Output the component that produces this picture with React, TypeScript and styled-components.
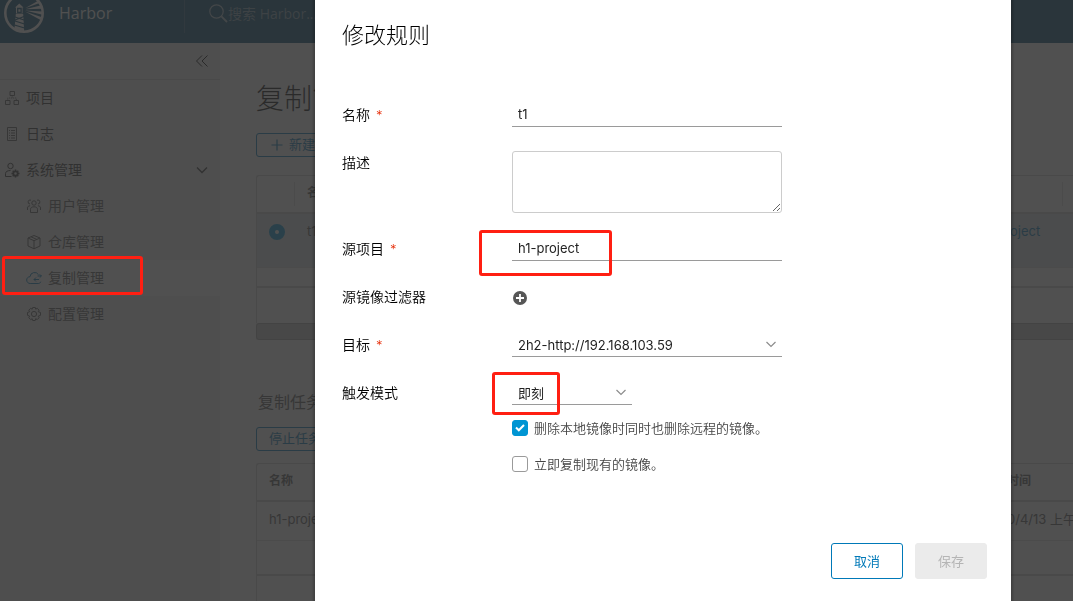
import React, { useState } from "react";
import styled, { createGlobalStyle, css } from "styled-components";

const latin = `Inter, "Noto Sans CJK SC", sans-serif`;
const humanist = `"Open Sans", "Noto Sans CJK SC", sans-serif`;

const GlobalStyle = createGlobalStyle`
  *, *::before, *::after { box-sizing: border-box; }
  body {
    margin: 0;
    overflow: hidden;
    background: #fafafa;
    color: #565656;
    font-family: ${latin};
    font-size: 13px;
    line-height: 24px;
  }
  button, input, select, textarea { font: inherit; color: inherit; }
`;

const Page = styled.div`
  display: flex;
  flex-direction: column;
  height: 100vh;
  overflow: hidden;
`;

/* ---------- header ---------- */

const Header = styled.header`
  display: flex;
  flex: none;
  align-items: center;
  height: 43px;
  padding: 0 0 17px 4px;
  background: #004a70;
  color: #fafafa;
  font-family: ${humanist};
`;

const Brand = styled.a`
  display: flex;
  align-items: center;
  gap: 15px;
  width: 180px;
  height: 40px;
  color: inherit;
  font-size: 16px;
  text-decoration: none;
`;

const Search = styled.label`
  display: flex;
  flex: 1;
  align-items: center;
  height: 40px;
  padding-left: 24px;
  border-left: 1px solid #2f6685;
  color: #a8bdc9;
`;

const SearchInput = styled.input`
  flex: 1;
  padding: 2px 0 0;
  border: 0;
  background: none;
  font-size: 14px;
  &::placeholder { color: #7f9fb2; opacity: 1; }
`;

/* ---------- side navigation ---------- */

const Body = styled.div`
  display: flex;
  flex: 1;
  min-height: 0;
`;

const Sidebar = styled.nav`
  flex: none;
  width: 220px;
  background: #eeeeee;
`;

const CollapseBar = styled.div`
  display: flex;
  justify-content: flex-end;
  height: 37px;
  padding-right: 10px;
  border-bottom: 1px solid #cccccc;
`;

const IconButton = styled.button`
  display: flex;
  align-items: center;
  padding: 0;
  border: 0;
  background: none;
`;

const CollapseButton = styled(IconButton)`
  color: #000000;
`;

const NavLink = styled.a<{ $sub?: boolean; $active?: boolean }>`
  display: flex;
  align-items: center;
  gap: 6px;
  height: 36px;
  padding: 0 11px 0 ${(p) => (p.$sub ? 26 : 4)}px;
  background: ${(p) => (p.$active ? "#ffffff" : "none")};
  color: ${(p) => (p.$sub ? "#565656" : "#313131")};
  font-size: 14px;
  text-decoration: none;
  svg { flex: none; }
`;

const NavText = styled.span`
  flex: 1;
`;

/* ---------- main area ---------- */

const Main = styled.main`
  flex: 1;
  min-width: 0;
  padding: 38px 0 0 36px;
  overflow: hidden;
`;

const PageTitle = styled.h1`
  margin: 0 0 16px;
  color: #000000;
  font-size: 28px;
  font-weight: 200;
  line-height: 36px;
`;

const SectionTitle = styled.h2`
  margin: 50px 0 13px;
  padding-left: 2px;
  font-size: 16px;
  font-weight: 400;
  line-height: 24px;
`;

const OutlineButton = styled.button`
  display: flex;
  align-items: center;
  gap: 6px;
  height: 24px;
  padding: 0 12px 2px;
  border: 1px solid #0079b8;
  border-radius: 3px;
  background: none;
  color: #0079b8;
`;

const GridFrame = styled.div<{ $gap: number }>`
  margin-top: ${(p) => p.$gap}px;
  border: solid #cccccc;
  border-width: 1px 0 0 1px;
  border-radius: 3px 0 0 0;
`;

const Grid = styled.table`
  width: 100%;
  border-collapse: collapse;
  table-layout: fixed;
`;

const HeadCell = styled.th`
  height: 37px;
  padding: 0 12px 2px;
  border-bottom: 2px solid #cccccc;
  font-size: 12px;
  font-weight: 600;
  text-align: left;
  white-space: nowrap;
`;

const DividedHead = styled(HeadCell)`
  background: linear-gradient(#dddddd, #dddddd) right center / 1px 24px no-repeat;
`;

const Cell = styled.td<{ $selected?: boolean }>`
  height: ${(p) => (p.$selected ? 54 : 40)}px;
  padding: 5px 12px;
  border-bottom: 1px solid #dddddd;
  background: ${(p) => (p.$selected ? "#d9e4ea" : "none")};
  vertical-align: top;
  white-space: nowrap;
`;

const GridFooter = styled.div<{ $gap: number; $height: number }>`
  height: ${(p) => p.$gap + p.$height}px;
  padding-top: ${(p) => p.$gap}px;
  &::before {
    content: "";
    display: block;
    border-top: 2px solid #cccccc;
  }
`;

const ScrollTrack = styled.div`
  height: 17px;
  border: 1px solid #aaaaaa;
  border-right: 0;
  border-radius: 3px 0 0 3px;
  background: #c8c8c8;
`;

const Radio = styled.input`
  display: block;
  width: 16px;
  height: 16px;
  margin: 5px 0 0;
  appearance: none;
  border: 6px solid #0095d3;
  border-radius: 50%;
  background: #ffffff;
`;

const ProjectLink = styled.a`
  color: #0079b8;
  text-decoration: none;
`;

/* ---------- dialog ---------- */

const Backdrop = styled.div`
  position: fixed;
  inset: 0;
  display: flex;
  padding: 0 62px 0 315px;
  background: rgba(49, 49, 49, 0.85);
`;

const Dialog = styled.form`
  display: flex;
  flex: 1;
  flex-direction: column;
  min-width: 0;
  padding: 21px 24px 22px 27px;
  background: #ffffff;
  box-shadow: 0 1px 2px 2px rgba(0, 0, 0, 0.2);
`;

const DialogTitle = styled.h2`
  margin: 0 0 54px;
  color: #000000;
  font-size: 22px;
  font-weight: 200;
  line-height: 28px;
`;

const Fields = styled.div`
  display: flex;
  flex: 1;
  flex-direction: column;
  gap: 24px;
`;

const Row = styled.div`
  display: flex;
  align-items: flex-start;
`;

const Label = styled.label`
  flex: none;
  width: 170px;
  color: #000000;
  font-size: 14px;
  font-weight: 350;
`;

const Required = styled.span`
  margin-left: 6px;
  color: #e62700;
  font-size: 13px;
  font-weight: 300;
  line-height: 16px;
`;

const Control = styled.div<{ $narrow?: boolean }>`
  position: relative;
  display: flex;
  width: ${(p) => (p.$narrow ? 120 : 270)}px;
`;

const underlined = css`
  width: 100%;
  height: 24px;
  padding: 0 6px 2px;
  border: 0;
  border-bottom: 1px solid #9a9a9a;
  border-radius: 0;
  outline: 0;
  background: none;
  color: #222222;
`;

const TextInput = styled.input`
  ${underlined}
`;

const Select = styled.select`
  ${underlined}
  appearance: none;
`;

const SelectArrow = styled.svg`
  position: absolute;
  top: 8px;
  right: 6px;
  pointer-events: none;
`;

const TextArea = styled.textarea`
  width: 100%;
  height: 62px;
  padding: 6px;
  border: 1px solid #cccccc;
  border-radius: 3px;
  outline: 0;
`;

const AddButton = styled(IconButton)`
  height: 26px;
  margin-bottom: -2px;
  color: #565656;
`;

const Checks = styled.div`
  display: flex;
  flex-direction: column;
  margin-top: 5px;
`;

const CheckLabel = styled.label`
  display: flex;
  align-items: center;
  gap: 6px;
  height: 36px;
  font-weight: 350;
  color: #444444;
`;

const CheckMark = styled.span`
  display: grid;
  > * { grid-area: 1 / 1; }
  svg { pointer-events: none; }
`;

const CheckInput = styled.input`
  width: 16px;
  height: 16px;
  margin: 0;
  appearance: none;
  border: 1px solid #9a9a9a;
  border-radius: 3px;
  &:checked {
    border-color: #0095d3;
    background: #0095d3;
  }
`;

const Actions = styled.div`
  display: flex;
  justify-content: flex-end;
  gap: 12px;
`;

const ActionButton = styled.button`
  width: 72px;
  height: 36px;
  padding: 0;
  border: 1px solid #0079b8;
  border-radius: 3px;
  background: #ffffff;
  color: #0079b8;
  &:disabled {
    border-color: #ebebeb;
    background: #ebebeb;
    color: #b5b5b5;
  }
`;

/* red frame drawn round a spot of interest */
const Marker = styled.span<{ $top: number; $left: number; $width: number; $height: number }>`
  position: absolute;
  z-index: 2;
  top: ${(p) => p.$top}px;
  left: ${(p) => p.$left}px;
  width: ${(p) => p.$width}px;
  height: ${(p) => p.$height}px;
  border: 3px solid #ff1f12;
  border-radius: 3px;
  pointer-events: none;
`;

const MarkerLayer = styled.div`
  position: fixed;
  inset: 0;
  pointer-events: none;
`;

/* ---------- drawings ---------- */

const Logo = () => (
  <svg width="40" height="40" viewBox="0 0 40 40" fill="none" aria-hidden="true">
    <circle cx="20" cy="20" r="18.7" stroke="#fafafa" strokeWidth="2.6" />
    <g fill="#fafafa">
      <path d="M11 14.5l4.300-4 4.200 4h-.9v6h-6.600v-6z" />
      <path d="M11.800 21h7.400l1 17.400-9.700-2.700z" />
      <path d="M21 15.300L35 7.200l1.400 2.600zM21 16.300l16.500-4 .7 3.500zM21 17.400l17.500 1v3.400zM21 18.600l17 5.600-1 3.100z" />
    </g>
    <g stroke="#004a70" strokeWidth="1.300">
      <path d="M13.700 15.500h3.400v4h-3.400z" />
      <path d="M11 24l9 3M11 28l9.500 3M10.500 32l10 3M20 23.500l-9 3.500" />
    </g>
  </svg>
);

const SearchIcon = () => (
  <svg width="19" height="19" viewBox="0 0 19 19" fill="none" stroke="currentColor" strokeWidth="1.200" aria-hidden="true">
    <circle cx="7.500" cy="7.500" r="6.700" />
    <path d="M12.400 12.400l5.600 5.600" strokeWidth="1.800" />
  </svg>
);

const line = { width: 16, height: 16, viewBox: "0 0 16 16", fill: "none", stroke: "currentColor", strokeWidth: 1, "aria-hidden": true };

const ProjectIcon = () => (
  <svg {...line} stroke="#565656">
    <path d="M6 1.500h4.500v4H6zM1.500 10.500H6v4H1.500zM10 10.500h4.500v4H10z" />
    <path d="M8.200 5.500V8M3.700 10.500V8h8.600v2.500" strokeDasharray="1 1" />
  </svg>
);
const LogIcon = () => (
  <svg {...line} stroke="#565656">
    <path d="M3.500 1.500h9v13h-9zM5 4.500h1M7 4.500h4M5 7h1M7 7h4M5 9.500h1M7 9.500h4M5 12h1M7 12h4" />
  </svg>
);
const AdminIcon = () => (
  <svg {...line}>
    <circle cx="6.500" cy="4" r="2.700" />
    <path d="M7.500 14.500h-6v-3c0-1.900 2.200-3 5-3" />
    <circle cx="11.500" cy="11.500" r="2.200" strokeWidth="1.800" />
    <path d="M11.500 7.500v1.500M11.500 14v1.500M7.500 11.500H9M14 11.500h1.500M8.700 8.700l1 1M13.300 13.300l1 1M14.300 8.700l-1 1M9.700 13.300l-1 1" strokeWidth="1.500" />
  </svg>
);
const UsersIcon = () => (
  <svg {...line}>
    <circle cx="8" cy="5" r="2.200" />
    <path d="M4.500 14.500v-3C4.500 9.500 6 8.800 8 8.800s3.500.7 3.500 2.700v3zM5 2.200A2 2 0 1 0 4 6M11 2.200A2 2 0 1 1 12 6M1.500 12v-2c0-1.400 1-2.200 2.600-2.200M14.500 12v-2c0-1.400-1-2.200-2.600-2.200" />
  </svg>
);
const CubeIcon = () => (
  <svg {...line}>
    <path d="M8 1.500l6 2.500v8l-6 2.800L2 12V4zM2 4l6 2.700L14 4M8 6.700v8M5 2.800l6 2.700" />
  </svg>
);
const ReplicationIcon = () => (
  <svg {...line} stroke="#0079b8">
    <path d="M12.500 4.700A4.600 4.600 0 0 0 4 6.700C2 6.700.7 8.200.7 10c0 2 1.500 3.500 3.500 3.500h8c1.300 0 2.300-.7 2.600-1.800M8 9.500h5M10 7.500l-2 2 2 2M15.500 6h-4M13.700 4.300L15.400 6l-1.700 1.700" />
  </svg>
);
const GearIcon = () => (
  <svg {...line}>
    <circle cx="8" cy="8" r="2.600" />
    <path d="M6.700 1.500h2.600l.4 1.700 1.500-.9 1.900 1.900-.9 1.500 2.300.8v2.800l-2.300.9.9 1.500-1.900 1.900-1.500-.9-.5 1.800H6.700l-.5-1.800-1.500.9-1.900-1.900.9-1.500-2.200-.9V6.500l2.200-.8-.9-1.500 1.900-1.900 1.500.9z" />
  </svg>
);
const CollapseIcon = () => (
  <svg {...line}>
    <path d="M8 2.500L2.500 8 8 13.500M13.500 2.500L8 8l5.500 5.500" />
  </svg>
);
const CaretIcon = () => (
  <svg width="14" height="14" viewBox="0 0 14 14" fill="none" stroke="currentColor" strokeWidth="1.300" aria-hidden="true">
    <path d="M2 4.500l5 5 5-5" />
  </svg>
);
const PlusIcon = () => (
  <svg width="14" height="14" viewBox="0 0 14 14" stroke="currentColor" strokeWidth="1.200" aria-hidden="true">
    <path d="M8 2.500v11M2.500 8h11" />
  </svg>
);
const AddIcon = () => (
  <svg width="16" height="16" viewBox="0 0 16 16" aria-hidden="true">
    <circle cx="8" cy="8" r="7" fill="currentColor" />
    <path d="M8 4v8M4 8h8" stroke="#ffffff" strokeWidth="1.800" />
  </svg>
);
const Arrow = () => (
  <SelectArrow width="10" height="7" viewBox="0 0 10 7" fill="none" stroke="#8c8c8c" strokeWidth="1.200" aria-hidden="true">
    <path d="M.5 1L5 5.500 9.500 1" />
  </SelectArrow>
);

/* ---------- parts ---------- */

const subItems = [
  { text: "用户管理", Icon: UsersIcon },
  { text: "仓库管理", Icon: CubeIcon },
  { text: "复制管理", Icon: ReplicationIcon, active: true },
  { text: "配置管理", Icon: GearIcon },
];

function Check({ text, initial }: { text: string; initial: boolean }) {
  const [on, setOn] = useState(initial);
  return (
    <CheckLabel>
      <CheckMark>
        <CheckInput type="checkbox" checked={on} onChange={() => setOn(!on)} />
        {on && (
          <svg width="16" height="16" viewBox="0 0 16 16" fill="none" stroke="#ffffff" strokeWidth="2" aria-hidden="true">
            <path d="M4 7.500l2.800 2.800L12 5" />
          </svg>
        )}
      </CheckMark>
      {text}
    </CheckLabel>
  );
}

function RuleDialog() {
  return (
    <Backdrop>
      <Dialog role="dialog" aria-labelledby="dialog-title" onSubmit={(e) => e.preventDefault()}>
        <DialogTitle id="dialog-title">修改规则</DialogTitle>
        <Fields>
          <Row>
            <Label htmlFor="name">名称<Required>*</Required></Label>
            <Control><TextInput id="name" defaultValue="t1" /></Control>
          </Row>
          <Row>
            <Label htmlFor="description">描述</Label>
            <Control><TextArea id="description" /></Control>
          </Row>
          <Row>
            <Label htmlFor="source">源项目<Required>*</Required></Label>
            <Control>
              <TextInput id="source" defaultValue="h1-project" />
              <Marker $top={-7} $left={-33} $width={133} $height={46} />
            </Control>
          </Row>
          <Row>
            <Label as="span">源镜像过滤器</Label>
            <AddButton type="button" aria-label="源镜像过滤器"><AddIcon /></AddButton>
          </Row>
          <Row>
            <Label htmlFor="target">目标<Required>*</Required></Label>
            <Control>
              <Select id="target"><option>2h2-http://192.168.103.59</option></Select>
              <Arrow />
            </Control>
          </Row>
          <Row>
            <Label htmlFor="trigger">触发模式</Label>
            <div>
              <Control $narrow>
                <Select id="trigger"><option>即刻</option></Select>
                <Arrow />
                <Marker $top={-9} $left={-20} $width={68} $height={43} />
              </Control>
              <Checks>
                <Check text="删除本地镜像时同时也删除远程的镜像。" initial />
                <Check text="立即复制现有的镜像。" initial={false} />
              </Checks>
            </div>
          </Row>
        </Fields>
        <Actions>
          <ActionButton type="button">取消</ActionButton>
          <ActionButton type="submit" disabled>保存</ActionButton>
        </Actions>
      </Dialog>
    </Backdrop>
  );
}

export default function App() {
  return (
    <>
      <GlobalStyle />
      <Page>
        <Header>
          <Brand href="#"><Logo />Harbor</Brand>
          <Search>
            <SearchIcon />
            <SearchInput type="search" placeholder="搜索 Harbor..." />
          </Search>
        </Header>
        <Body>
          <Sidebar>
            <CollapseBar>
              <CollapseButton type="button" aria-label="«"><CollapseIcon /></CollapseButton>
            </CollapseBar>
            <NavLink href="#"><ProjectIcon /><NavText>项目</NavText></NavLink>
            <NavLink href="#"><LogIcon /><NavText>日志</NavText></NavLink>
            <NavLink href="#"><AdminIcon /><NavText>系统管理</NavText><CaretIcon /></NavLink>
            {subItems.map(({ text, Icon, active }) => (
              <NavLink key={text} href="#" $sub $active={active}><Icon /><NavText>{text}</NavText></NavLink>
            ))}
          </Sidebar>
          <Main>
            <PageTitle>复制管理</PageTitle>
            <OutlineButton type="button"><PlusIcon />新建规则</OutlineButton>
            <GridFrame $gap={18}>
              <Grid>
                <colgroup><col width="38" /><col /><col width="96" /><col width="10" /></colgroup>
                <thead>
                  <tr><DividedHead /><HeadCell>名称</HeadCell><DividedHead>项目</DividedHead><HeadCell /></tr>
                </thead>
                <tbody>
                  <tr>
                    <Cell $selected><Radio type="radio" name="rule" aria-label="t1" defaultChecked /></Cell>
                    <Cell $selected>t1</Cell>
                    <Cell $selected><ProjectLink href="#">h1-project</ProjectLink></Cell>
                    <Cell $selected />
                  </tr>
                </tbody>
              </Grid>
              <GridFooter $gap={18} $height={37} />
            </GridFrame>
            <ScrollTrack />
            <SectionTitle>复制任务</SectionTitle>
            <OutlineButton type="button">停止任务</OutlineButton>
            <GridFrame $gap={12}>
              <Grid>
                <colgroup><col /><col width="102" /></colgroup>
                <thead>
                  <tr><HeadCell>名称</HeadCell><HeadCell>创建时间</HeadCell></tr>
                </thead>
                <tbody>
                  <tr><Cell>h1-project</Cell><Cell>2020/4/13 上午</Cell></tr>
                </tbody>
              </Grid>
              <GridFooter $gap={33} $height={60} />
            </GridFrame>
          </Main>
        </Body>
      </Page>
      <RuleDialog />
      <MarkerLayer>
        <Marker $top={256} $left={2} $width={141} $height={39} />
      </MarkerLayer>
    </>
  );
}
